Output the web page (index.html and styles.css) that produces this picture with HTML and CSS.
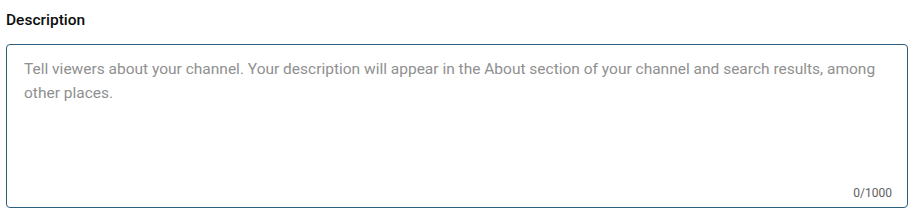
FILE: index.html
```html
<!DOCTYPE html>
<html lang="en">
<head>
    <meta charset="UTF-8">
    <title>Description</title>
    <link rel="stylesheet" href="styles.css">
</head>
<body>

<div class="field">
    <label class="field-label" for="description">Description</label>
    <div class="field-box">
        <textarea id="description" class="field-input" placeholder="Tell viewers about your channel. Your description will appear in the About section of your channel and search results, among other places."></textarea>
        <div class="field-count">0/1000</div>
    </div>
</div>

</body>
</html>
```

FILE: styles.css
```css
body {
    margin: 0;
    font-family: Roboto, "Noto Sans", Arial, sans-serif;
    background: #fff;
}
.field {
    padding: 10px 6px 0 6px;
}
.field-label {
    display: block;
    font-size: 15.5px;
    font-weight: 500;
    color: #0d0d0d;
    line-height: 20px;
    margin-bottom: 14px;
}
.field-box {
    border: 1px solid #2b5f7e;
    border-radius: 4px;
    height: 162px;
    display: flex;
    flex-direction: column;
}
.field-input {
    flex: 1;
    width: 100%;
    box-sizing: border-box;
    border: none;
    outline: none;
    resize: none;
    overflow: hidden;
    padding: 12px 12px 0 17px;
    font-family: inherit;
    font-size: 15.5px;
    line-height: 24px;
    color: #0d0d0d;
    background: transparent;
}
.field-input::placeholder {
    color: #909090;
}
.field-count {
    text-align: right;
    font-size: 12px;
    color: #606060;
    padding: 0 15px 6px 0;
    line-height: 16px;
}
```
